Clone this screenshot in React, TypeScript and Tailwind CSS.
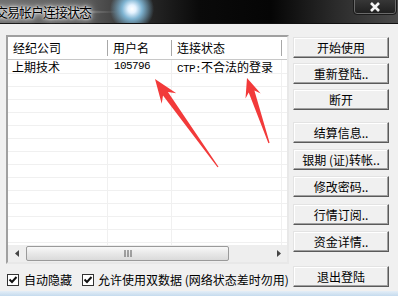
import { ReactNode } from "react";

// red annotation arrow: tapered shaft from tail to a notched head at the tip
const arrowPoints = (tx: number, ty: number, sx: number, sy: number, head: number, barb: number) => {
  const dx = tx - sx;
  const dy = ty - sy;
  const len = Math.hypot(dx, dy);
  const ux = dx / len;
  const uy = dy / len;
  const nx = -uy;
  const ny = ux;
  const bx = tx - ux * head;
  const by = ty - uy * head;
  const cx = tx - ux * head * 0.75;
  const cy = ty - uy * head * 0.75;
  const shaft = 3;
  const tail = 0.6;
  const pts = [
    [tx, ty],
    [bx + nx * barb, by + ny * barb],
    [cx + nx * shaft, cy + ny * shaft],
    [sx + nx * tail, sy + ny * tail],
    [sx - nx * tail, sy - ny * tail],
    [cx - nx * shaft, cy - ny * shaft],
    [bx - nx * barb, by - ny * barb],
  ];
  return pts.map(([x, y]) => `${x.toFixed(1)},${y.toFixed(1)}`).join(" ");
};

const WinButton = ({ children, className }: { children: ReactNode; className: string }) => (
  <div
    className={`h-[21px] w-[96px] flex items-center justify-center bg-[#f0f0f0] border border-t-[#e3e3e3] border-l-[#e3e3e3] border-r-[#5a5a5a] border-b-[#5a5a5a] shadow-[inset_-1px_-1px_#a0a0a0,inset_1px_1px_#ffffff] text-[12px] leading-none text-black whitespace-nowrap ${className}`}
  >
    {children}
  </div>
);

const CheckBox = () => (
  <div className="w-[12px] h-[12px] border border-[#333333] bg-white flex items-center justify-center">
    <svg width="10" height="10" viewBox="0 0 10 10">
      <path d="M1.5 4.5 L4 7 L8.5 2" fill="none" stroke="#111" strokeWidth="2" />
    </svg>
  </div>
);

const buttons = [
  { label: "开始使用", mt: "mt-[2px]" },
  { label: "重新登陆..", mt: "mt-[5px]" },
  { label: "断开", mt: "mt-[5px]" },
  { label: "结算信息..", mt: "mt-[12px]" },
  { label: "银期 (证)转帐..", mt: "mt-[6px]" },
  { label: "修改密码..", mt: "mt-[6px]" },
  { label: "行情订阅..", mt: "mt-[7px]" },
  { label: "资金详情..", mt: "mt-[6px]" },
  { label: "退出登陆", mt: "mt-[14px]" },
];

const emptyRows = Array.from({ length: 14 }, (_, i) => i);

const App = () => {
  return (
    <div className="relative w-[398px] h-[296px] overflow-hidden bg-[#f0f0f0] font-['Noto_Sans_CJK_SC',sans-serif] text-black">
      {/* title bar */}
      <div className="relative h-[24px] border-b border-b-[#111111] bg-[radial-gradient(circle_at_132px_9px,#ffffff_0px,#e4f2ff_4px,#7fb4d2_10px,transparent_22px),radial-gradient(ellipse_at_60px_12px,#a0a0a0_0px,transparent_60px),linear-gradient(90deg,#6e6e6e_0%,#5a5a5a_22%,#2a2a2a_36%,#0a0a0a_50%,#050505_68%,#2a2a2a_84%,#4a4a4a_100%)]">
        <div className="absolute left-[-5px] top-[4px] text-[13px] leading-[15px] tracking-[-1px] text-black [text-shadow:0_0_4px_#ffffff,0_0_8px_#ffffff,0_0_2px_#ffffff]">
          交易帐户连接状态
        </div>
        <div className="absolute left-[353px] top-[-3px] w-[44px] h-[18px] rounded-b-[4px] border border-[#1a1a1a] shadow-[inset_0_0_0_1px_#6a6a6a] bg-[linear-gradient(180deg,#3a3a3a,#1e1e1e)] flex items-center justify-center pt-[2px]">
          <svg width="12" height="10" viewBox="0 0 12 10">
            <path d="M2 1 L10 9 M10 1 L2 9" stroke="#f4f4f4" strokeWidth="2.6" />
          </svg>
        </div>
      </div>

      {/* body */}
      <div className="flex h-[267px] pl-[6px] pt-[11px]">
        <div className="flex flex-col w-[283px]">
          {/* list view */}
          <div className="h-[229px] flex flex-col border-2 border-t-[#a0a0a0] border-l-[#a0a0a0] border-r-[#e8e8e8] border-b-[#e8e8e8] bg-white overflow-hidden">
            <div className="flex h-[23px] shrink-0 border-b border-b-[#c8c8c8] text-[12px] leading-none">
              <div className="w-[100px] flex items-center pl-[5px] border-r border-r-[#a8a8a8] my-[3px]">经纪公司</div>
              <div className="w-[64px] flex items-center pl-[5px] border-r border-r-[#a8a8a8] my-[3px]">用户名</div>
              <div className="w-[110px] flex items-center pl-[5px] border-r border-r-[#a8a8a8] my-[3px]">连接状态</div>
            </div>
            <div className="flex-1 overflow-hidden">
              <div className="flex h-[14px] border-b border-b-[#f0f0f0] text-[12px] leading-[13px]">
                <div className="w-[100px] pl-[4px] border-r border-r-[#f0f0f0] whitespace-nowrap">上期技术</div>
                <div className="w-[64px] pl-[6px] border-r border-r-[#f0f0f0] font-['Liberation_Mono',monospace] text-[11px] tracking-[-0.6px] leading-[13px]">105796</div>
                <div className="w-[110px] pl-[5px] border-r border-r-[#f0f0f0] whitespace-nowrap">
                  <span className="font-['Liberation_Mono',monospace] text-[11px] tracking-[-0.6px]">CTP:</span>不合法的登录
                </div>
              </div>
              {emptyRows.map((r) => (
                <div key={r} className="flex h-[13px] border-b border-b-[#f0f0f0]">
                  <div className="w-[100px] border-r border-r-[#f0f0f0]" />
                  <div className="w-[64px] border-r border-r-[#f0f0f0]" />
                  <div className="w-[110px] border-r border-r-[#f0f0f0]" />
                </div>
              ))}
            </div>
            {/* horizontal scrollbar */}
            <div className="flex items-center h-[17px] shrink-0 bg-[#eeeeee]">
              <div className="w-[18px] h-full flex items-center justify-center">
                <svg width="5" height="7" viewBox="0 0 5 7"><path d="M4 0 L0 3.5 L4 7 Z" fill="#444" /></svg>
              </div>
              <div className="w-[203px] h-[15px] rounded-[2px] border border-[#9a9a9a] bg-[linear-gradient(180deg,#f8f8f8,#e8e8e8_50%,#dadada)] flex items-center justify-center">
                <svg width="8" height="7" viewBox="0 0 8 7">
                  <path d="M1 0 V7 M4 0 V7 M7 0 V7" stroke="#555" strokeWidth="1" />
                </svg>
              </div>
              <div className="flex-1" />
              <div className="w-[18px] h-full flex items-center justify-center">
                <svg width="5" height="7" viewBox="0 0 5 7"><path d="M1 0 L5 3.5 L1 7 Z" fill="#444" /></svg>
              </div>
            </div>
          </div>

          {/* checkbox row */}
          <div className="flex items-center h-[14px] mt-[9px] pl-[1px] text-[12px] leading-none whitespace-nowrap">
            <CheckBox />
            <span className="ml-[5px]">自动隐藏</span>
            <div className="ml-[10px]"><CheckBox /></div>
            <span className="ml-[4px]">允许使用双数据 (网络状态差时勿用)</span>
          </div>
        </div>

        {/* buttons */}
        <div className="flex flex-col ml-[4px]">
          {buttons.map((b) => (
            <WinButton key={b.label} className={b.mt}>{b.label}</WinButton>
          ))}
        </div>
      </div>

      {/* window frame bottom */}
      <div className="h-[5px] bg-[linear-gradient(180deg,#e4eef7,#c5dbee)]" />

      {/* red annotation arrows */}
      <svg className="absolute left-0 top-0 pointer-events-none" width="398" height="296">
        <polygon points={arrowPoints(155, 79, 218, 167, 24, 9)} fill="#f23a3a" />
        <polygon points={arrowPoints(247, 78, 269, 143, 19, 8)} fill="#f23a3a" />
      </svg>
    </div>
  );
};

export default App;
